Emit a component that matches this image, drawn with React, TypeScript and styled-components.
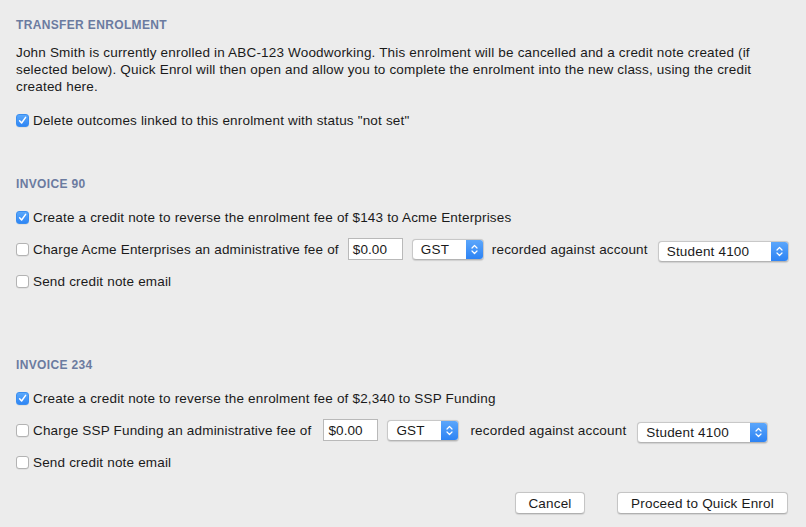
import React from "react";
import styled, { createGlobalStyle } from "styled-components";

const Global = createGlobalStyle`
  html, body { margin: 0; padding: 0; background: #ececec; }
  body { font-family: "Liberation Sans", Arial, sans-serif; color: #1a1a1a; }
`;

const Page = styled.div`
  width: 806px;
  height: 527px;
  box-sizing: border-box;
  padding: 17px 14px 0 16px;
  display: flex;
  flex-direction: column;
  font-size: 13.5px;
`;

const Heading = styled.h2<{ $top: number }>`
  margin: ${(p) => p.$top}px 0 0 0;
  font-size: 12px;
  line-height: 16px;
  font-weight: bold;
  color: #6b7ba0;
  letter-spacing: 0.35px;
`;

const Paragraph = styled.p`
  margin: 11px 0 0 0;
  font-size: 13.5px;
  line-height: 17px;
  letter-spacing: 0.18px;
`;

const Rows = styled.div<{ $top: number }>`
  display: flex;
  flex-direction: column;
  gap: 8px;
  margin-top: ${(p) => p.$top}px;
`;

const Row = styled.div`
  display: flex;
  align-items: center;
  height: 24px;
  letter-spacing: 0.18px;
`;

const Box = styled.span<{ $checked?: boolean }>`
  width: 13px;
  height: 13px;
  box-sizing: border-box;
  border-radius: 3px;
  margin-right: 4px;
  display: inline-flex;
  align-items: center;
  justify-content: center;
  flex: none;
  background: ${(p) => (p.$checked ? "linear-gradient(#5aa8fb, #2f86f5)" : "#fff")};
  border: 1px solid ${(p) => (p.$checked ? "#3a8ef0" : "#b3b3b3")};
  box-shadow: 0 0.5px 0.5px rgba(0, 0, 0, 0.1);
`;

const Label = styled.span<{ $gap?: number }>`
  margin-right: ${(p) => p.$gap ?? 0}px;
  white-space: nowrap;
`;

const Field = styled.span<{ $gap: number }>`
  width: 55px;
  height: 22px;
  box-sizing: border-box;
  background: #fff;
  border: 1px solid #b9b9b9;
  padding: 0 0 0 4px;
  display: inline-flex;
  align-items: center;
  margin-right: ${(p) => p.$gap}px;
  font-size: 13.5px;
  letter-spacing: 0.1px;
`;

const Select = styled.span<{ $width: number; $gap?: number; $shift?: number }>`
  width: ${(p) => p.$width}px;
  height: 21px;
  box-sizing: border-box;
  background: #fff;
  border: 1px solid #c8c8c8;
  border-bottom-color: #b4b4b4;
  border-radius: 4px;
  box-shadow: 0 0.5px 1px rgba(0, 0, 0, 0.12);
  display: inline-flex;
  align-items: center;
  justify-content: space-between;
  padding-left: 8px;
  margin-right: ${(p) => p.$gap ?? 0}px;
  margin-top: ${(p) => p.$shift ?? 0}px;
  overflow: hidden;
  flex: none;
`;

const Stepper = styled.span`
  width: 17px;
  align-self: stretch;
  background: linear-gradient(#5ba6fb, #2d83f4);
  display: inline-flex;
  align-items: center;
  justify-content: center;
`;

const Footer = styled.div`
  display: flex;
  justify-content: flex-end;
  gap: 32px;
  margin-top: 18px;
  padding-right: 4px;
`;

const Button = styled.button<{ $width: number }>`
  width: ${(p) => p.$width}px;
  height: 22px;
  background: #fff;
  border: 1px solid #c5c5c5;
  border-bottom-color: #b0b0b0;
  border-radius: 4px;
  box-shadow: 0 0.5px 1px rgba(0, 0, 0, 0.1);
  font-family: "Liberation Sans", Arial, sans-serif;
  font-size: 13.5px;
  color: #1a1a1a;
  padding: 0;
  letter-spacing: 0.18px;
`;

const Check = () => (
  <svg width="9" height="9" viewBox="0 0 9 9">
    <path d="M1.6 4.8 L3.6 7 L7.6 1.4" fill="none" stroke="#fff" strokeWidth="1.5" strokeLinecap="round" strokeLinejoin="round" />
  </svg>
);

const Chevrons = () => (
  <svg width="7" height="11" viewBox="0 0 7 11">
    <path d="M1 4 L3.5 1.5 L6 4 M1 7 L3.5 9.5 L6 7" fill="none" stroke="#fff" strokeWidth="1.2" strokeLinecap="round" strokeLinejoin="round" />
  </svg>
);

const CheckBox = ({ checked }: { checked?: boolean }) => <Box $checked={checked}>{checked && <Check />}</Box>;

type InvoiceProps = {
  number: string;
  amount: string;
  payer: string;
  headTop: number;
  labelGap: number;
  gstGap: number;
  recGap: number;
};

const Invoice = ({ number, amount, payer, headTop, labelGap, gstGap, recGap }: InvoiceProps) => (
  <>
    <Heading $top={headTop}>INVOICE {number}</Heading>
    <Rows $top={13}>
      <Row>
        <CheckBox checked />
        <Label>
          Create a credit note to reverse the enrolment fee of {amount} to {payer}
        </Label>
      </Row>
      <Row>
        <CheckBox />
        <Label $gap={labelGap}>Charge {payer} an administrative fee of</Label>
        <Field $gap={9}>$0.00</Field>
        <Select $width={72} $gap={gstGap}>
          GST
          <Stepper>
            <Chevrons />
          </Stepper>
        </Select>
        <Label $gap={recGap}>recorded against account</Label>
        <Select $width={131} $shift={5}>
          Student 4100
          <Stepper>
            <Chevrons />
          </Stepper>
        </Select>
      </Row>
      <Row>
        <CheckBox />
        <Label>Send credit note email</Label>
      </Row>
    </Rows>
  </>
);

export default function App() {
  return (
    <Page>
      <Global />
      <Heading $top={0}>TRANSFER ENROLMENT</Heading>
      <Paragraph>
        John Smith is currently enrolled in ABC-123 Woodworking. This enrolment will be cancelled and a credit note
        created (if selected below). Quick Enrol will then open and allow you to complete the enrolment into the new
        class, using the credit created here.
      </Paragraph>
      <Rows $top={13}>
        <Row>
          <CheckBox checked />
          <Label>Delete outcomes linked to this enrolment with status "not set"</Label>
        </Row>
      </Rows>
      <Invoice number="90" amount="$143" payer="Acme Enterprises" headTop={44} labelGap={9} gstGap={8} recGap={10} />
      <Invoice number="234" amount="$2,340" payer="SSP Funding" headTop={64} labelGap={12} gstGap={11} recGap={11} />
      <Footer>
        <Button $width={70}>Cancel</Button>
        <Button $width={171}>Proceed to Quick Enrol</Button>
      </Footer>
    </Page>
  );
}
